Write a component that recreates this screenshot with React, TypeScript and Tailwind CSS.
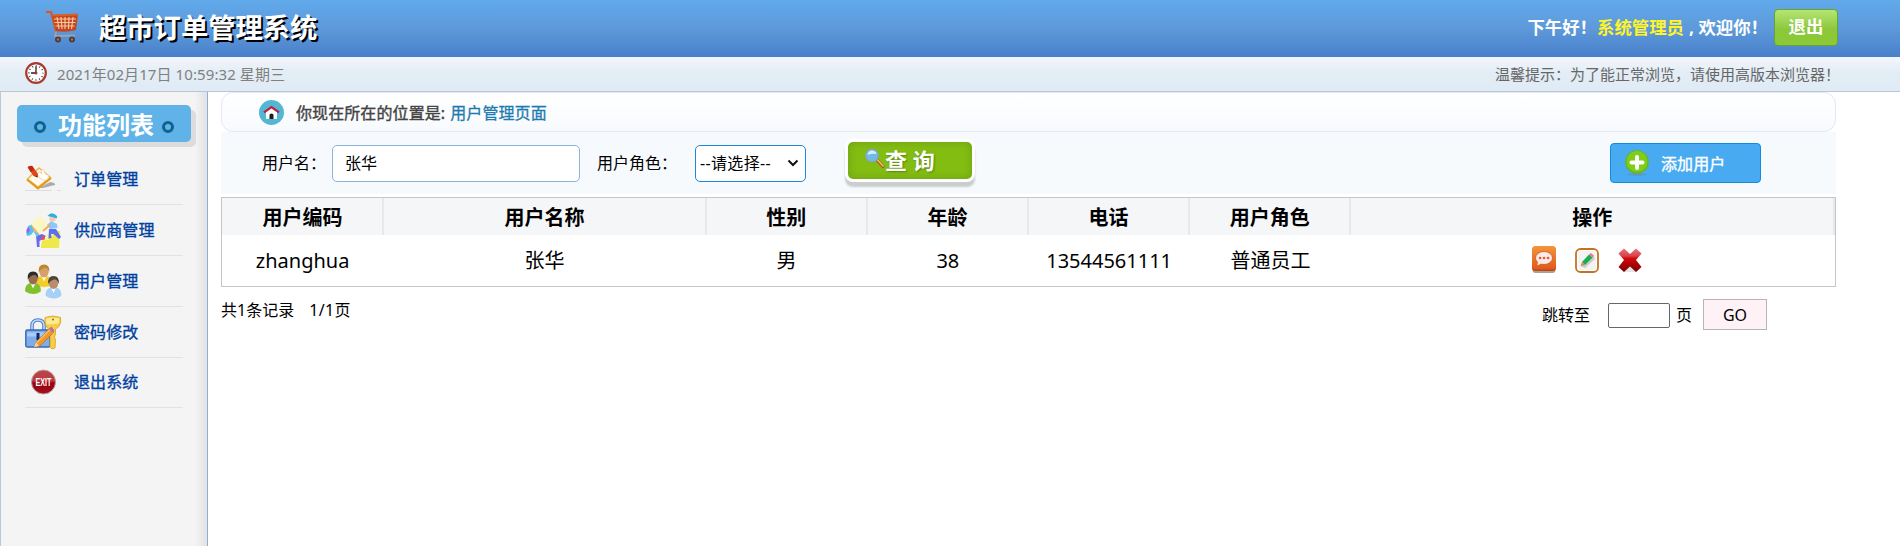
import React from "react";

const IconCart = () => (
  <svg width="34" height="34" viewBox="0 0 34 34" className="block">
    <path d="M1 2h5l5 19" fill="none" stroke="#d9581f" strokeWidth="2.2" strokeLinejoin="round" />
    <path d="M7 5l26-1-2 16q-10 3-20 1z" fill="#c8441c" />
    <path d="M7.500 5.500L33 4.500" stroke="#d9602a" strokeWidth="2" />
    <path d="M9 9h22M9.500 12.500h21M10.500 16h19M12 7l2 12M16 7l1 12M20 7v12M24 7l-.5 12M28 7l-1.500 12" stroke="#f3c9a0" strokeWidth="1.200" />
    <path d="M11 22l-1 4 20-.5" fill="none" stroke="#9ba3ae" strokeWidth="1.800" />
    <circle cx="13" cy="29.500" r="3" fill="#4b3d45" /><circle cx="13" cy="29.500" r="1.200" fill="#b8672f" />
    <circle cx="27" cy="29.500" r="3" fill="#4b3d45" /><circle cx="27" cy="29.500" r="1.200" fill="#b8672f" />
  </svg>
);

const IconClock = () => (
  <svg width="22" height="22" viewBox="0 0 22 22" className="block">
    <circle cx="11" cy="11" r="9.800" fill="#fff" stroke="#a8382c" strokeWidth="2.200" />
    <circle cx="11" cy="11" r="7" fill="none" stroke="#555" strokeWidth="1.800" strokeDasharray="1 2.665" strokeDashoffset=".5" />
    <path d="M11 4.500V11H6" fill="none" stroke="#222" strokeWidth="1.300" />
    <circle cx="11" cy="11" r="1.500" fill="#b03030" />
  </svg>
);

const IconHome = () => (
  <svg width="25" height="25" viewBox="0 0 25 25" className="block">
    <circle cx="12.500" cy="12.500" r="12.500" fill="#53b7d3" />
    <path d="M7 12l5.500-4 5.500 4v7H7z" fill="#fff" />
    <path d="M5 12.300l7.500-5.300 7.500 5.300" fill="none" stroke="#c0203f" strokeWidth="2.200" />
    <path d="M10.500 19v-4q0-1.500 2-1.500t2 1.500v4z" fill="#1c1c1c" />
  </svg>
);

const IconOrder = () => (
  <svg width="37" height="36" viewBox="0 0 37 36" className="block">
    <path d="M14 26l11-6q6 1 5 3l-12 3z" fill="#9a9a9a" opacity=".8" />
    <path d="M2.500 17L14 6l11.500 9.500L13 25z" fill="#fffaf0" stroke="#f0b63a" strokeWidth="1.500" strokeLinejoin="round" />
    <path d="M2 17.500L13 26.500 26 16" fill="none" stroke="#e39a1c" strokeWidth="2" />
    <path d="M12.500 12q1-3 3-2l1 2 0-4 2-.5 1.500 4 3.500 2-1 4-3.500 1-5-3z" fill="#fff" stroke="#e9c590" strokeWidth=".7" />
    <path d="M2.500 5.500Q4 3 7.500 4L13 12l-.6 3.500-3.900-1.500z" fill="#e2451e" />
    <path d="M3 5q2-1.500 4-1l2 3.500-3.500 2.500z" fill="#b92b12" /><path d="M10 14l2.400 1.500.3-2z" fill="#5a2c1c" />
    <path d="M0 28.500h27m5 0h4" stroke="#ddd" />
  </svg>
);

const IconSupplier = () => (
  <svg width="37" height="36" viewBox="0 0 37 36" className="block">
    <path d="M16 34l1-7 6-1v-4h5l1-4h6l-1 17H16z" fill="#efe84a" />
    <path d="M17 27l6-1v-4h5" fill="none" stroke="#f8f58c" strokeWidth="1.500" />
    <path d="M6 11L15.500 2 24 13l-9.500 8z" fill="#fbf7c4" /><path d="M6 11l8.500 10-2 1.500L5 14z" fill="#f8b175" />
    <path d="M1 19l2-6 3-1 3 6-3 4-4 1z" fill="#4cc6ea" /><path d="M1.500 17l2-3 1.500 3-2 4z" fill="#c04df0" />
    <path d="M11 23l6-2 4 2-3 3-3.500 2v6H12l-.5-6z" fill="#666bee" /><path d="M8 18l6 3-2 3z" fill="#4fcdee" /><circle cx="18" cy="25" r="2" fill="#ea4d58" />
    <path d="M22 12l4-4 6 3 .5 4-7.500 1z" fill="#8ec7fa" /><path d="M24 16h7l5 8-2 2-5.500-5-2.500 0 .5 4-3 .5z" fill="#5b6ff0" />
    <path d="M18 18l7-6" stroke="#f3a967" strokeWidth="2" /><circle cx="27.500" cy="5.500" r="3.200" fill="#f9c7ae" />
    <path d="M22.500 3q4-5.500 9.500 0v2.500l-5-1.500z" fill="#2bb0e4" />
  </svg>
);

const Person = ({ x, y, hair, skin, shirt }: { x: number; y: number; hair: string; skin: string; shirt: string }) => (
  <g transform={`translate(${x} ${y})`}>
    <path d="M-7.800 16q-.5-7 5-8.500h5.600q5.500 1.500 5 8.500-7 5-15.600 0z" fill={shirt} />
    <path d="M-2.500 7.500L0 13l2.500-5.500z" fill="#fff" />
    <ellipse cx="0" cy="3.500" rx="4.600" ry="5.400" fill={skin} />
    <path d="M-5.200 4q-1-8 5.200-8t5.200 8q-1.200-4-3.200-4.500-4-.5-7.200 4.500z" fill={hair} />
  </g>
);

const IconUsers = () => (
  <svg width="37" height="36" viewBox="0 0 37 36" className="block">
    <Person x={19} y={4.500} hair="#b88a30" skin="#d69f6c" shirt="#f4cc26" />
    <Person x={8} y={11.500} hair="#2e2c28" skin="#986a50" shirt="#80c02c" />
    <Person x={28.500} y={16} hair="#4d443c" skin="#b98c6b" shirt="#a6d0f5" />
  </svg>
);

const IconPassword = () => (
  <svg width="37" height="36" viewBox="0 0 37 36" className="block">
    <path d="M7 16v-5q0-6 6-6t6 6v5" fill="none" stroke="#4f82cb" strokeWidth="3.600" />
    <path d="M7 16v-5q0-6 6-6t6 6v5" fill="none" stroke="#c2dbf8" strokeWidth="1.500" />
    <rect x=".8" y="15" width="24" height="17" rx="1.500" fill="#7fadea" stroke="#3469b5" strokeWidth="1.400" />
    <path d="M2 19.500h22" stroke="#abcaf4" strokeWidth="4" />
    <path d="M20 2.500q8-3 15.500 0 1.500 5-2 9.500l-3 2v5l-1 3 1 3-.5 8-3 1-2-2V15q-6-3-5-12.500z" fill="#f6ce45" stroke="#dca01e" strokeWidth=".8" />
    <path d="M21 3.500q7-2 13.500 0l-1 5-12 1z" fill="#fdea92" /><circle cx="28" cy="4.500" r="1" fill="#8c6a1b" />
    <path d="M13 18v7" stroke="#0c2c66" strokeWidth="3" />
    <path d="M9 32l2-5 14-14 4 4-14 14z" fill="#f0962c" stroke="#b76519" strokeWidth=".6" />
    <path d="M12 27.500l13-13" stroke="#fbc070" strokeWidth="1.200" />
    <path d="M24 13.500l2.500-2 3 4-2.500 2z" fill="#b86fb2" /><path d="M9 32l2-5 3 4z" fill="#f6d5aa" />
  </svg>
);

const IconExit = () => (
  <svg width="37" height="36" viewBox="0 0 37 36" className="block">
    <defs><linearGradient id="exit" x1="0" y1="0" x2="0" y2="1"><stop offset="0" stopColor="#b8454a" /><stop offset=".45" stopColor="#bb3a42" /><stop offset=".55" stopColor="#98000c" /><stop offset="1" stopColor="#a0141e" /></linearGradient></defs>
    <circle cx="18.500" cy="17" r="12" fill="url(#exit)" stroke="#b9a0a0" strokeWidth="1" />
    <text x="18.500" y="20.800" fontSize="10" fontWeight="700" fill="#fff" textAnchor="middle" textLength="16" lengthAdjust="spacingAndGlyphs" fontFamily="Liberation Sans">EXIT</text>
  </svg>
);

const IconSearch = () => (
  <svg width="21" height="21" viewBox="0 0 21 21" className="block">
    <path d="M13 12l6 6.500" stroke="#9c5826" strokeWidth="3.200" strokeLinecap="round" />
    <path d="M13 11.500l6 6.500" stroke="#f2b469" strokeWidth="1.800" strokeLinecap="round" />
    <circle cx="8" cy="7.500" r="6.300" fill="#72b9e6" stroke="#83a7ae" strokeWidth="1.200" />
    <path d="M3.500 7q1-5 5-4.500t4 3.500q-4-1-9 1z" fill="#d4efff" />
  </svg>
);

const IconAdd = () => (
  <svg width="26" height="26" viewBox="0 0 26 26" className="block">
    <ellipse cx="13" cy="24.500" rx="10" ry="1.200" fill="#648fae" opacity=".7" />
    <circle cx="13" cy="12" r="11.800" fill="#67b919" /><circle cx="13" cy="11.500" r="10.500" fill="#80cc1b" />
    <path d="M13 7v11M7.500 12.500h11" stroke="#fff" strokeWidth="4" strokeLinecap="round" />
  </svg>
);

const IconView = () => (
  <svg width="24" height="27" viewBox="0 0 24 27" className="block">
    <defs><linearGradient id="view" x1="0" y1="0" x2="0" y2="1"><stop offset="0" stopColor="#f4953c" /><stop offset="1" stopColor="#e1581c" /></linearGradient></defs>
    <rect x=".5" y="3" width="23" height="24" rx="3" fill="#a9a29c" />
    <rect x="0" y="1" width="24" height="24" rx="3.500" fill="#c4450f" />
    <rect x="0" y="0" width="24" height="23.500" rx="3.500" fill="url(#view)" />
    <ellipse cx="12" cy="12" rx="8.500" ry="6.500" fill="#fdeae4" stroke="#c4582c" strokeWidth=".8" /><path d="M6 15l-.5 4.500 4.500-2.500z" fill="#fdeae4" />
    <path d="M8 12h.1M12 12h.1M16 12h.1" stroke="#d9603c" strokeWidth="2.600" strokeLinecap="round" />
  </svg>
);

const IconEdit = () => (
  <svg width="24" height="25" viewBox="0 0 24 25" className="block">
    <rect x="1" y="1" width="22" height="23" rx="4.500" fill="#f3f3f3" stroke="#c37422" strokeWidth="1.800" />
    <rect x="2.500" y="2.500" width="19" height="20" rx="3" fill="none" stroke="#fff" />
    <path d="M6 18.500L18.500 8l1.500 3-10 9z" fill="#ccc" />
    <path d="M7 14l7-7.500 3.500 3L10 17z" fill="#18ae51" /><path d="M14 6.500L15.800 5l3.200 2.800-1.500 1.700z" fill="#ee7683" />
    <path d="M7 14l-1.500 4L10 17z" fill="#d28b42" />
  </svg>
);

const IconDelete = () => (
  <svg width="24" height="25" viewBox="0 0 24 25" className="block">
    <defs><linearGradient id="del" x1="0" y1="0" x2="0" y2="1"><stop offset="0" stopColor="#e9737a" /><stop offset=".32" stopColor="#d8434a" /><stop offset=".42" stopColor="#d30a0d" /><stop offset="1" stopColor="#760002" /></linearGradient></defs>
    <path d="M6 24l6-6 6 6z" fill="#e5e5e5" />
    <path d="M6 .5l6 5.500 6-5.500 5.500 5-5.500 6.500 5.500 7-5.500 5-6-5.500-6 5.500L.5 19 6 12 .5 5.500z" fill="url(#del)" />
  </svg>
);

const menu = [
  { label: "订单管理", icon: <IconOrder /> },
  { label: "供应商管理", icon: <IconSupplier /> },
  { label: "用户管理", icon: <IconUsers /> },
  { label: "密码修改", icon: <IconPassword /> },
  { label: "退出系统", icon: <IconExit /> },
];

const heads = ["用户编码", "用户名称", "性别", "年龄", "电话", "用户角色", "操作"];
const cells = ["zhanghua", "张华", "男", "38", "13544561111", "普通员工"];
const columns = "grid grid-cols-[1fr_2fr_1fr_1fr_1fr_1fr_3fr]";

const Dot = () => <span className="size-3 rounded-full border-[3.5px] border-[#0f628f] bg-[#65b5e2]" />;

export default function App() {
  return (
    <div className="flex h-[546px] w-[1900px] flex-col overflow-hidden bg-white font-['Noto_Sans','Noto_Sans_CJK_SC',sans-serif] text-base leading-6 text-black">
      <header className="flex h-[57px] shrink-0 items-center bg-linear-to-b from-[#61aaeb] via-[#5e99da] to-[#4880ca] pr-[62px] pl-[45px] font-bold text-white">
        <div className="-mt-1"><IconCart /></div>
        <h1 className="-mt-0.5 ml-5 text-[27.3px] leading-9 [text-shadow:2px_2px_0_#000]">超市订单管理系统</h1>
        <p className="-mt-1 mr-[6px] ml-auto flex text-[17.4px]">
          <span>下午好！</span>
          <span className="text-[#fff32a]">系统管理员</span>
          <span className="ml-[5px]">, 欢迎你！</span>
        </p>
        <button className="mt-[-2px] h-[37px] w-16 rounded-[4px] border border-[#65a336] bg-linear-to-b from-[#b5e572] via-[#8cc83a] via-55% to-[#8bc936] pb-1 text-[17.4px] font-bold">退出</button>
      </header>

      <div className="flex h-[35px] shrink-0 items-center border-b border-[#b9c6d8] bg-linear-to-b from-[#f4f6fd] via-[#e3edf5] via-45% to-[#dfebf5] pl-[25px] text-[15px]">
        <div className="-mt-[3px]"><IconClock /></div>
        <span className="ml-[10px] tracking-[0.09px] text-[#808080]">2021年02月17日 10:59:32 星期三</span>
        <span className="mr-[60px] ml-auto text-[#666]">温馨提示：为了能正常浏览，请使用高版本浏览器！</span>
      </div>

      <div className="flex min-h-0 flex-1">
        <aside className="w-[208px] shrink-0 border-r border-l border-r-[#8fb0d6] border-l-[#bcc8dc] bg-[linear-gradient(to_right,#f4f4f4_94%,#e2e2e2)] pt-[13px] pl-4">
          <h2 className="flex h-[37px] w-[174px] items-center rounded-[5px] bg-[#60b3e8] pl-[17px] text-2xl font-bold text-white shadow-[5px_5px_0_#dcdcdc]">
            <span className="mt-1.5 mr-3 flex"><Dot /></span>
            <span className="mt-0.5">功能列表</span>
            <span className="mt-1.5 ml-2 flex"><Dot /></span>
          </h2>
          <ul className="mt-[12px] ml-2 w-[158px]">
            {menu.map((m) => (
              <li key={m.label} className="flex h-[51px] items-center border-b border-[#e2e2e2] pt-px text-base text-[#0040a0] last:h-[50px] [-webkit-text-stroke:0.35px_#0040a0]">
                {m.icon}
                <span className="-mt-0.5 ml-[12px] tracking-[0.1px]">{m.label}</span>
              </li>
            ))}
          </ul>
        </aside>

        <main className="ml-[13px] w-[1615px]">
          <div className="flex h-10 items-center rounded-[12px] border border-[#e4e7f4] bg-linear-to-b from-white to-[#f7fafd] pl-[37px]">
            <IconHome />
            <span className="mt-0.5 ml-[12px] tracking-[0.09px] text-[#444] [-webkit-text-stroke:0.4px_#444]">你现在所在的位置是:</span>
            <span className="mt-0.5 ml-[5px] tracking-[0.1px] text-[#1d7bb0] [-webkit-text-stroke:0.3px_#1d7bb0]">用户管理页面</span>
          </div>

          <div className="flex h-[62px] items-center bg-[#f6fafd] pl-[41px]">
            <label className="w-[70px]">用户名：</label>
            <input className="h-[37px] w-[248px] rounded-[5px] border border-[#8ab3dc] bg-white px-3 pb-0.5" defaultValue="张华" />
            <label className="ml-[17px] w-[98px]">用户角色：</label>
            <div className="flex h-[37px] w-[111px] items-center rounded-[5px] border border-[#1d87dc] bg-white pr-[6px] pl-[4px]">
              <span className="whitespace-nowrap tracking-[0.35px]">--请选择--</span>
              <svg width="12" height="8" viewBox="0 0 12 8" className="ml-auto shrink-0"><path d="M1.500 1.500L6 6l4.500-4.500" fill="none" stroke="#111" strokeWidth="2" /></svg>
            </div>
            <button className="mt-[-5px] ml-[39px] flex h-[43px] w-[130px] items-center rounded-[8px] border-[3px] border-white bg-[#83bd12] pl-4 text-white shadow-[inset_0_0_8px_#6c9f16,0_5px_2px_#c9cdd0]">
              <span className="-mt-1"><IconSearch /></span>
              <span className="-mt-0.5 text-[22px] font-bold [text-shadow:1px_1px_2px_#56840b]">查 询</span>
            </button>
            <button className="ml-[635px] flex h-10 w-[151px] items-center rounded-[4px] border border-[#138be0] bg-[#48aaf1] pl-[13px] text-white [-webkit-text-stroke:0.35px_#fff]">
              <IconAdd />
              <span className="mt-0.5 ml-[11px] tracking-[0.1px]">添加用户</span>
            </button>
          </div>

          <section className="mt-[3px] h-[90px] border border-[#c4c6c9] text-xl">
            <div className={`${columns} h-[37px] bg-[#f5f6f8] pl-px text-center font-bold`}>
              {heads.map((h) => (
                <div key={h} className="h-[37px] border-r-2 border-[#e6e8eb] pt-0.5 leading-[35px]">{h}</div>
              ))}
            </div>
            <div className={`${columns} h-[51px] items-center text-center`}>
              {cells.map((c) => (
                <div key={c}>{c}</div>
              ))}
              <div className="flex items-center justify-center gap-[19px] pr-[12px]">
                <span className="-mt-0.5"><IconView /></span>
                <IconEdit />
                <IconDelete />
              </div>
            </div>
          </section>

          <div className="flex h-[55px] items-center">
            <span className="-mt-2.5">共1条记录</span>
            <span className="-mt-2.5 ml-[15px] tracking-[0.4px]">1/1页</span>
            <span className="ml-auto">跳转至</span>
            <input className="mt-0.5 ml-[18px] h-[25px] w-[62px] rounded-[2px] border border-[#666] bg-white" />
            <span className="ml-[6px]">页</span>
            <button className="mr-[69px] ml-[11px] h-[31px] w-16 border border-[#b5b5b5] bg-[#fff2f7]">GO</button>
          </div>
        </main>
      </div>
    </div>
  );
}
